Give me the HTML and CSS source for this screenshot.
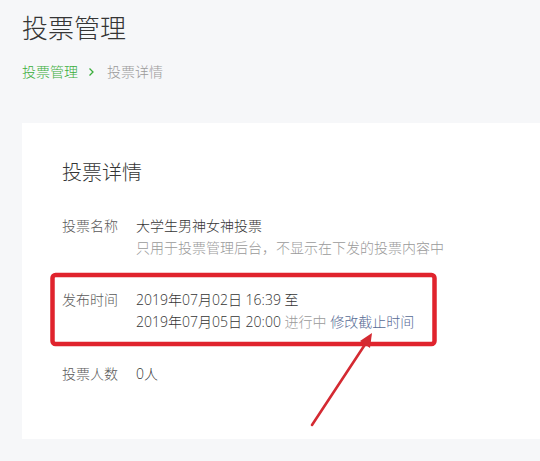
FILE: index.html
```html
<!DOCTYPE html>
<html lang="zh-CN">
<head>
    <meta charset="UTF-8">
    <meta name="viewport" content="width=device-width, initial-scale=1.0">
    <title>投票管理</title>
    <link rel="stylesheet" href="styles.css">
</head>
<body>
    <div class="page">
        <h1 class="page-title">投票管理</h1>
        <div class="breadcrumb">
            <a href="#" class="crumb-link">投票管理</a>
            <span class="crumb-sep">
                <svg width="7" height="10" viewBox="0 0 7 10"><path d="M1.5 1.5 L5 5 L1.5 8.5" fill="none" stroke="#3aae3c" stroke-width="1.3"/></svg>
            </span>
            <span class="crumb-current">投票详情</span>
        </div>

        <div class="card">
            <h2 class="card-title">投票详情</h2>

            <div class="info-row">
                <div class="info-label">投票名称</div>
                <div class="info-value">
                    <div>大学生男神女神投票</div>
                    <div class="hint">只用于投票管理后台，不显示在下发的投票内容中</div>
                </div>
            </div>

            <div class="info-row">
                <div class="info-label">发布时间</div>
                <div class="info-value">
                    <div>2019年07月02日 16:39 至</div>
                    <div>2019年07月05日 20:00 <span class="status">进行中</span> <a href="#" class="link">修改截止时间</a></div>
                </div>
            </div>

            <div class="info-row">
                <div class="info-label">投票人数</div>
                <div class="info-value">0人</div>
            </div>
        </div>

        <!-- annotation drawn over the screenshot -->
        <svg class="annotation" width="540" height="461" viewBox="0 0 540 461">
            <rect x="52.5" y="275" width="382" height="69" rx="3" fill="none" stroke="#e0232d" stroke-width="4.5"/>
            <line x1="312" y1="425" x2="366" y2="343" stroke="#d42a32" stroke-width="2.6" stroke-linecap="round"/>
            <polygon points="372,333 370,348 360,341" fill="#d42a32"/>
        </svg>
    </div>
</body>
</html>
```

FILE: styles.css
```css
* {
    box-sizing: border-box;
}
body {
    margin: 0;
    background-color: #f6f7f9;
    font-family: "Open Sans", "Noto Sans CJK SC", sans-serif;
    font-weight: 300;
    color: #353535;
}
.page {
    position: relative;
    padding: 10px 0 21px 22px;
    min-height: 461px;
}
.page-title {
    margin: 0;
    font-size: 26px;
    font-weight: 300;
    line-height: 36px;
    color: #353535;
}
.breadcrumb {
    display: flex;
    align-items: center;
    margin-top: 15px;
    font-size: 14px;
    line-height: 22px;
}
.crumb-link {
    color: #3aae3c;
    text-decoration: none;
}
.crumb-sep {
    display: flex;
    margin: 0 12px 0 10px;
}
.crumb-current {
    color: #9a9a9a;
}
.card {
    margin-top: 40px;
    background: #ffffff;
    padding: 36px 40px 54px;
}
.card-title {
    margin: 0 0 28px;
    font-size: 20px;
    font-weight: 300;
    line-height: 28px;
    color: #353535;
}
.info-row {
    display: flex;
    font-size: 14px;
    line-height: 22px;
    margin-bottom: 30px;
}
.info-row:last-child {
    margin-bottom: 0;
}
.info-label {
    width: 74px;
    flex-shrink: 0;
    color: #5a5a5a;
}
.info-value {
    color: #353535;
}
.hint,
.status {
    color: #9a9a9a;
}
.link {
    color: #576b95;
    text-decoration: none;
}
.annotation {
    position: absolute;
    left: 0;
    top: 0;
    pointer-events: none;
}
```
